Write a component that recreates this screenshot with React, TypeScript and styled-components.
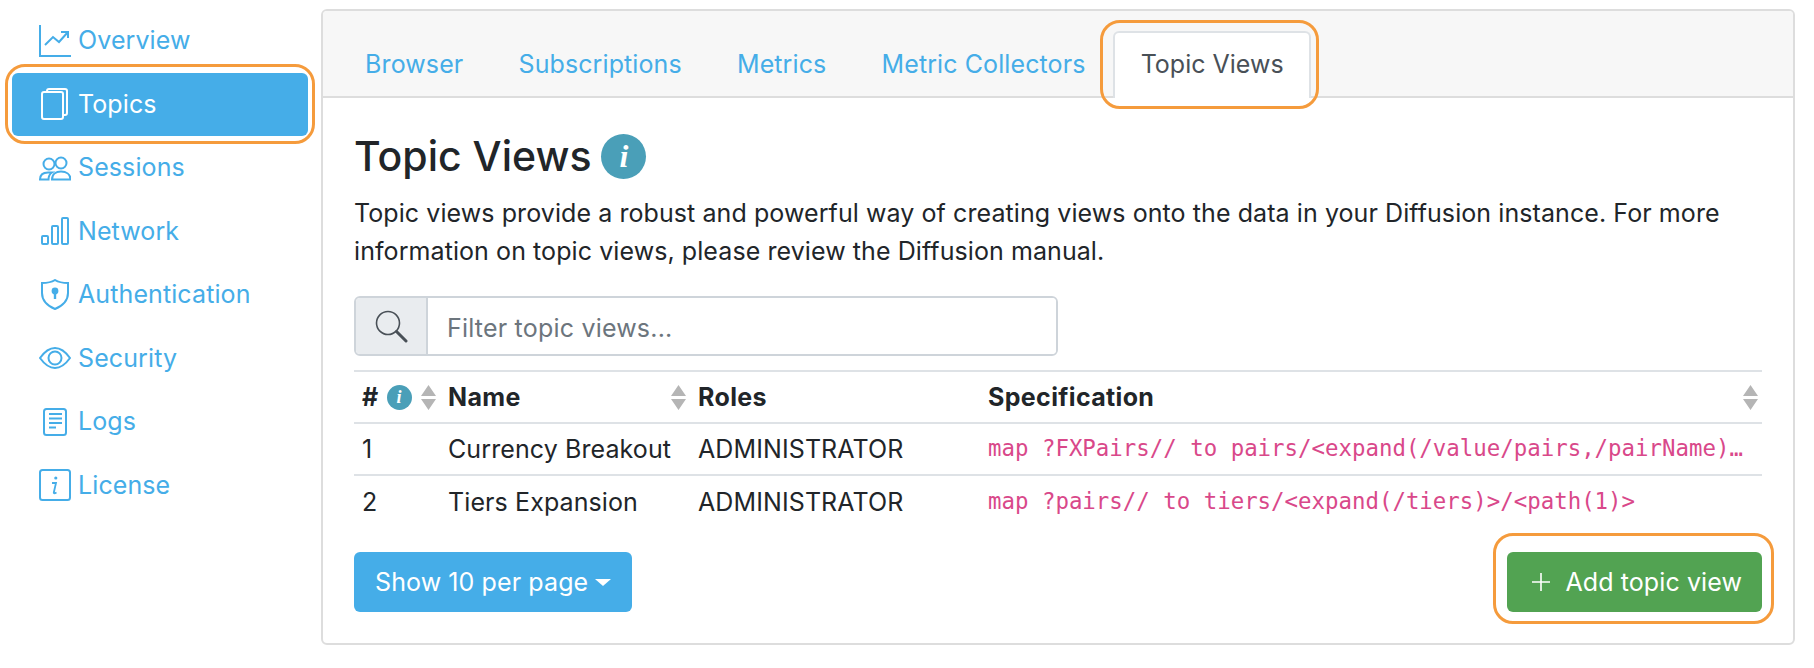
import React from 'react';
import styled, { createGlobalStyle } from 'styled-components';

const GlobalStyle = createGlobalStyle`
  html, body {
    margin: 0;
    padding: 0;
    background: #ffffff;
  }
  body {
    font-family: Inter, "Liberation Sans", sans-serif;
    color: #212529;
  }
`;

const Page = styled.div`
  width: 1814px;
  height: 668px;
  display: flex;
  align-items: flex-start;
  padding-top: 9px;
  box-sizing: border-box;
  overflow: hidden;
`;

const Sidebar = styled.nav`
  width: 321px;
  flex: none;
  display: flex;
  flex-direction: column;
`;

const NavItem = styled.a<{ $active?: boolean }>`
  position: relative;
  height: 63.5px;
  margin: 0 13px 0 12px;
  padding-left: 27px;
  display: flex;
  align-items: center;
  gap: 7px;
  font-size: 25px;
  letter-spacing: 0.1px;
  border-radius: 6px;
  color: ${p => (p.$active ? '#ffffff' : '#45ade8')};
  background: ${p => (p.$active ? '#45ade8' : 'transparent')};
`;

const NavLabel = styled.span`
  margin-top: -1px;
`;

const NavIcon = styled.svg`
  width: 32px;
  height: 32px;
  flex: none;
  fill: none;
  stroke: currentColor;
  stroke-width: 2;
`;

const Highlight = styled.span<{ $inset: string }>`
  position: absolute;
  inset: ${p => p.$inset};
  border: 3px solid #f59b3c;
  border-radius: 20px;
  pointer-events: none;
`;

const Card = styled.main`
  width: 1474px;
  height: 636px;
  flex: none;
  box-sizing: border-box;
  border: 2px solid #dddddd;
  border-radius: 6px;
`;

const TabBar = styled.div`
  height: 87px;
  box-sizing: border-box;
  padding: 20px 0 0 14.5px;
  display: flex;
  align-items: stretch;
  background: #f7f7f7;
  border-bottom: 2px solid #dddddd;
  border-radius: 4px 4px 0 0;
`;

const Tab = styled.a<{ $active?: boolean }>`
  position: relative;
  box-sizing: border-box;
  height: ${p => (p.$active ? '67px' : '65px')};
  padding: 0 25.6px ${p => (p.$active ? '4px' : '2px')};
  display: flex;
  align-items: center;
  font-size: 25px;
  letter-spacing: ${p => (p.$active ? '0' : '0.1px')};
  color: ${p => (p.$active ? '#495057' : '#45ade8')};
  background: ${p => (p.$active ? '#ffffff' : 'transparent')};
  border: 2px solid ${p => (p.$active ? '#dee2e6' : 'transparent')};
  border-bottom: 0;
  border-radius: 6px 6px 0 0;
`;

const Content = styled.section`
  padding: 35px 31px 0;
`;

const TitleRow = styled.div`
  display: flex;
  align-items: center;
  gap: 10px;
  height: 46px;
`;

const Title = styled.h1`
  margin: 0;
  font-size: 41px;
  font-weight: 500;
  line-height: 46px;
`;

const InfoBadge = styled.span<{ $size: number }>`
  width: ${p => p.$size}px;
  height: ${p => p.$size}px;
  flex: none;
  border-radius: 50%;
  display: inline-flex;
  align-items: center;
  justify-content: center;
  background: #4a9fb8;
  color: #ffffff;
  font-family: "Liberation Serif", serif;
  font-style: italic;
  font-weight: 700;
  font-size: ${p => Math.round(p.$size * 0.72)}px;
  line-height: 1;
`;

const Intro = styled.p`
  margin: 15px 0 0;
  font-size: 25px;
  letter-spacing: 0.08px;
  line-height: 38px;
`;

const SearchGroup = styled.div`
  margin-top: 26px;
  width: 704px;
  height: 60px;
  box-sizing: border-box;
  display: flex;
  border: 2px solid #ced4da;
  border-radius: 6px;
  overflow: hidden;
`;

const SearchAddon = styled.div`
  width: 70px;
  flex: none;
  display: flex;
  align-items: center;
  justify-content: center;
  background: #e9ecef;
  border-right: 2px solid #ced4da;
  color: #495057;
`;

const SearchInput = styled.input`
  flex: 1;
  border: 0;
  outline: 0;
  padding: 3px 18px 0 19px;
  font: inherit;
  font-size: 25px;
  letter-spacing: 0.2px;
  color: #212529;
  &::placeholder {
    color: #6c757d;
    opacity: 1;
  }
`;

const Table = styled.table`
  margin-top: 14px;
  width: 100%;
  table-layout: fixed;
  border-collapse: collapse;
  font-size: 25px;
  letter-spacing: 0.1px;
`;

const HeadCell = styled.th<{ $width?: number }>`
  width: ${p => (p.$width ? `${p.$width}px` : 'auto')};
  height: 52px;
  box-sizing: border-box;
  padding: 0 3px 0 8px;
  text-align: left;
  font-weight: 700;
  letter-spacing: 0.35px;
  border-top: 2px solid #dee2e6;
  border-bottom: 2px solid #dee2e6;
`;

const HeadInner = styled.div`
  display: flex;
  align-items: center;
  gap: 8px;
`;

const HeadLabel = styled.span`
  flex: 1;
`;

const Cell = styled.td<{ $last?: boolean }>`
  height: 52px;
  box-sizing: border-box;
  padding: 0 8px;
  white-space: nowrap;
  border-bottom: ${p => (p.$last ? '0' : '2px solid #dee2e6')};
`;

const SpecCell = styled(Cell)`
  padding-right: 18px;
  padding-bottom: 2px;
  overflow: hidden;
  text-overflow: ellipsis;
  font-family: "DejaVu Sans Mono", "Liberation Mono", monospace;
  font-size: 22.4px;
  letter-spacing: 0;
  color: #d9488a;
`;

const Footer = styled.div`
  margin-top: 25px;
  display: flex;
  justify-content: space-between;
`;

const Button = styled.button<{ $color: string }>`
  position: relative;
  height: 60px;
  box-sizing: border-box;
  padding: 0 21px;
  display: flex;
  align-items: center;
  border: 0;
  border-radius: 6px;
  background: ${p => p.$color};
  color: #ffffff;
  font: inherit;
  font-size: 25px;
  letter-spacing: 0.1px;
`;

const GreenButton = styled(Button)`
  padding-right: 20px;
`;

const Caret = styled.span`
  margin-left: 7px;
  width: 0;
  height: 0;
  border-top: 7px solid #ffffff;
  border-left: 8px solid transparent;
  border-right: 8px solid transparent;
`;

const PlusIcon = styled.svg`
  width: 18px;
  height: 18px;
  margin: 0 15px 0 4px;
  stroke: #ffffff;
  stroke-width: 1.6;
`;

const SortIcon: React.FC = () => (
  <svg width="17" height="25" viewBox="0 0 17 25" style={{ flex: 'none' }}>
    <path d="M8.5 0 16 11H1Z M1 14H16L8.5 25Z" fill="#b5b5b5" />
  </svg>
);

const icons: Record<string, React.ReactNode> = {
  Overview: (
    <>
      <path d="M1 0V31H32" />
      <path d="M6 20L14 12L20 17L29 7" />
      <path d="M22 7H29V13" />
    </>
  ),
  Topics: (
    <>
      <rect x="3" y="4" width="21" height="27" rx="2" />
      <path d="M8 3.5V3a2 2 0 0 1 2-2H26a2 2 0 0 1 2 2V25a2 2 0 0 1-2 2H25" />
    </>
  ),
  Sessions: (
    <>
      <circle cx="22" cy="11" r="5.5" />
      <circle cx="10" cy="12" r="5.5" />
      <path d="M13 27.5C13 22 17 19.5 22 19.5S31.5 22 31.5 27.5Z" />
      <path d="M1 27.5C1 23 4 20.5 9 20.5H13C10.5 22 9.5 24.5 9.5 27.5Z" />
    </>
  ),
  Network: (
    <>
      <rect x="3" y="21" width="6" height="8" rx="1" />
      <rect x="13" y="11" width="6" height="18" rx="1" />
      <rect x="23" y="3" width="6" height="26" rx="1" />
    </>
  ),
  Authentication: (
    <>
      <path d="M16 1C20 3.5 25 4 29 4V14C29 22 23 27 16 30C9 27 3 22 3 14V4C7 4 12 3.5 16 1Z" />
      <circle cx="16" cy="12" r="2.4" fill="currentColor" />
      <path d="M16 13V20" strokeWidth="2.4" />
    </>
  ),
  Security: (
    <>
      <path d="M1 16C6 9 11 6 16 6S26 9 31 16C26 23 21 26 16 26S6 23 1 16Z" />
      <circle cx="16" cy="16" r="6.5" />
    </>
  ),
  Logs: (
    <>
      <rect x="5" y="3" width="22" height="26" rx="2.5" />
      <path d="M10 8H23M10 12.5H23M10 17H23M10 21.5H17" />
    </>
  ),
  License: (
    <>
      <rect x="1" y="1" width="30" height="30" rx="2.5" />
      <circle cx="16.8" cy="9" r="1.6" fill="currentColor" stroke="none" />
      <path d="M13 14H17L14.8 23.5Q14.6 25 17.5 23.5" strokeWidth="1.8" />
    </>
  ),
};

const navItems = ['Overview', 'Topics', 'Sessions', 'Network', 'Authentication', 'Security', 'Logs', 'License'];

const views = [
  {
    id: 1,
    name: 'Currency Breakout',
    roles: 'ADMINISTRATOR',
    spec: 'map ?FXPairs// to pairs/<expand(/value/pairs,/pairName)>/<path(1)>',
  },
  {
    id: 2,
    name: 'Tiers Expansion',
    roles: 'ADMINISTRATOR',
    spec: 'map ?pairs// to tiers/<expand(/tiers)>/<path(1)>',
  },
];

const App: React.FC = () => (
  <Page>
    <GlobalStyle />
    <Sidebar>
      {navItems.map(item => (
        <NavItem key={item} $active={item === 'Topics'}>
          <NavIcon viewBox="0 0 32 32">{icons[item]}</NavIcon>
          <NavLabel>{item}</NavLabel>
          {item === 'Topics' && <Highlight $inset="-9px -7px -8px -7px" />}
        </NavItem>
      ))}
    </Sidebar>
    <Card>
      <TabBar>
        <Tab>Browser</Tab>
        <Tab>Subscriptions</Tab>
        <Tab>Metrics</Tab>
        <Tab>Metric Collectors</Tab>
        <Tab $active>
          Topic Views
          <Highlight $inset="-13px -10px -11px -15px" />
        </Tab>
      </TabBar>
      <Content>
        <TitleRow>
          <Title>Topic Views</Title>
          <InfoBadge $size={45}>i</InfoBadge>
        </TitleRow>
        <Intro>
          Topic views provide a robust and powerful way of creating views onto the data in your Diffusion instance. For more
          information on topic views, please review the Diffusion manual.
        </Intro>
        <SearchGroup>
          <SearchAddon>
            <svg width="34" height="34" viewBox="0 0 34 34" fill="none" stroke="currentColor">
              <circle cx="14" cy="14" r="11.5" strokeWidth="1.6" />
              <path d="M22.5 22.5L32 32" strokeWidth="3" strokeLinecap="round" />
            </svg>
          </SearchAddon>
          <SearchInput placeholder="Filter topic views..." readOnly />
        </SearchGroup>
        <Table>
          <thead>
            <tr>
              <HeadCell $width={86}>
                <HeadInner>
                  <span>#</span>
                  <InfoBadge $size={25}>i</InfoBadge>
                  <SortIcon />
                </HeadInner>
              </HeadCell>
              <HeadCell $width={250}>
                <HeadInner>
                  <HeadLabel>Name</HeadLabel>
                  <SortIcon />
                </HeadInner>
              </HeadCell>
              <HeadCell $width={290}>Roles</HeadCell>
              <HeadCell>
                <HeadInner>
                  <HeadLabel>Specification</HeadLabel>
                  <SortIcon />
                </HeadInner>
              </HeadCell>
            </tr>
          </thead>
          <tbody>
            {views.map((view, i) => {
              const last = i === views.length - 1;
              return (
                <tr key={view.id}>
                  <Cell $last={last}>{view.id}</Cell>
                  <Cell $last={last}>{view.name}</Cell>
                  <Cell $last={last}>{view.roles}</Cell>
                  <SpecCell $last={last}>{view.spec}</SpecCell>
                </tr>
              );
            })}
          </tbody>
        </Table>
        <Footer>
          <Button $color="#45ade8">
            Show 10 per page
            <Caret />
          </Button>
          <GreenButton $color="#52a352">
            <PlusIcon viewBox="0 0 18 18">
              <path d="M9 0V18M0 9H18" />
            </PlusIcon>
            Add topic view
            <Highlight $inset="-19px -12px -12px -14px" />
          </GreenButton>
        </Footer>
      </Content>
    </Card>
  </Page>
);

export default App;
